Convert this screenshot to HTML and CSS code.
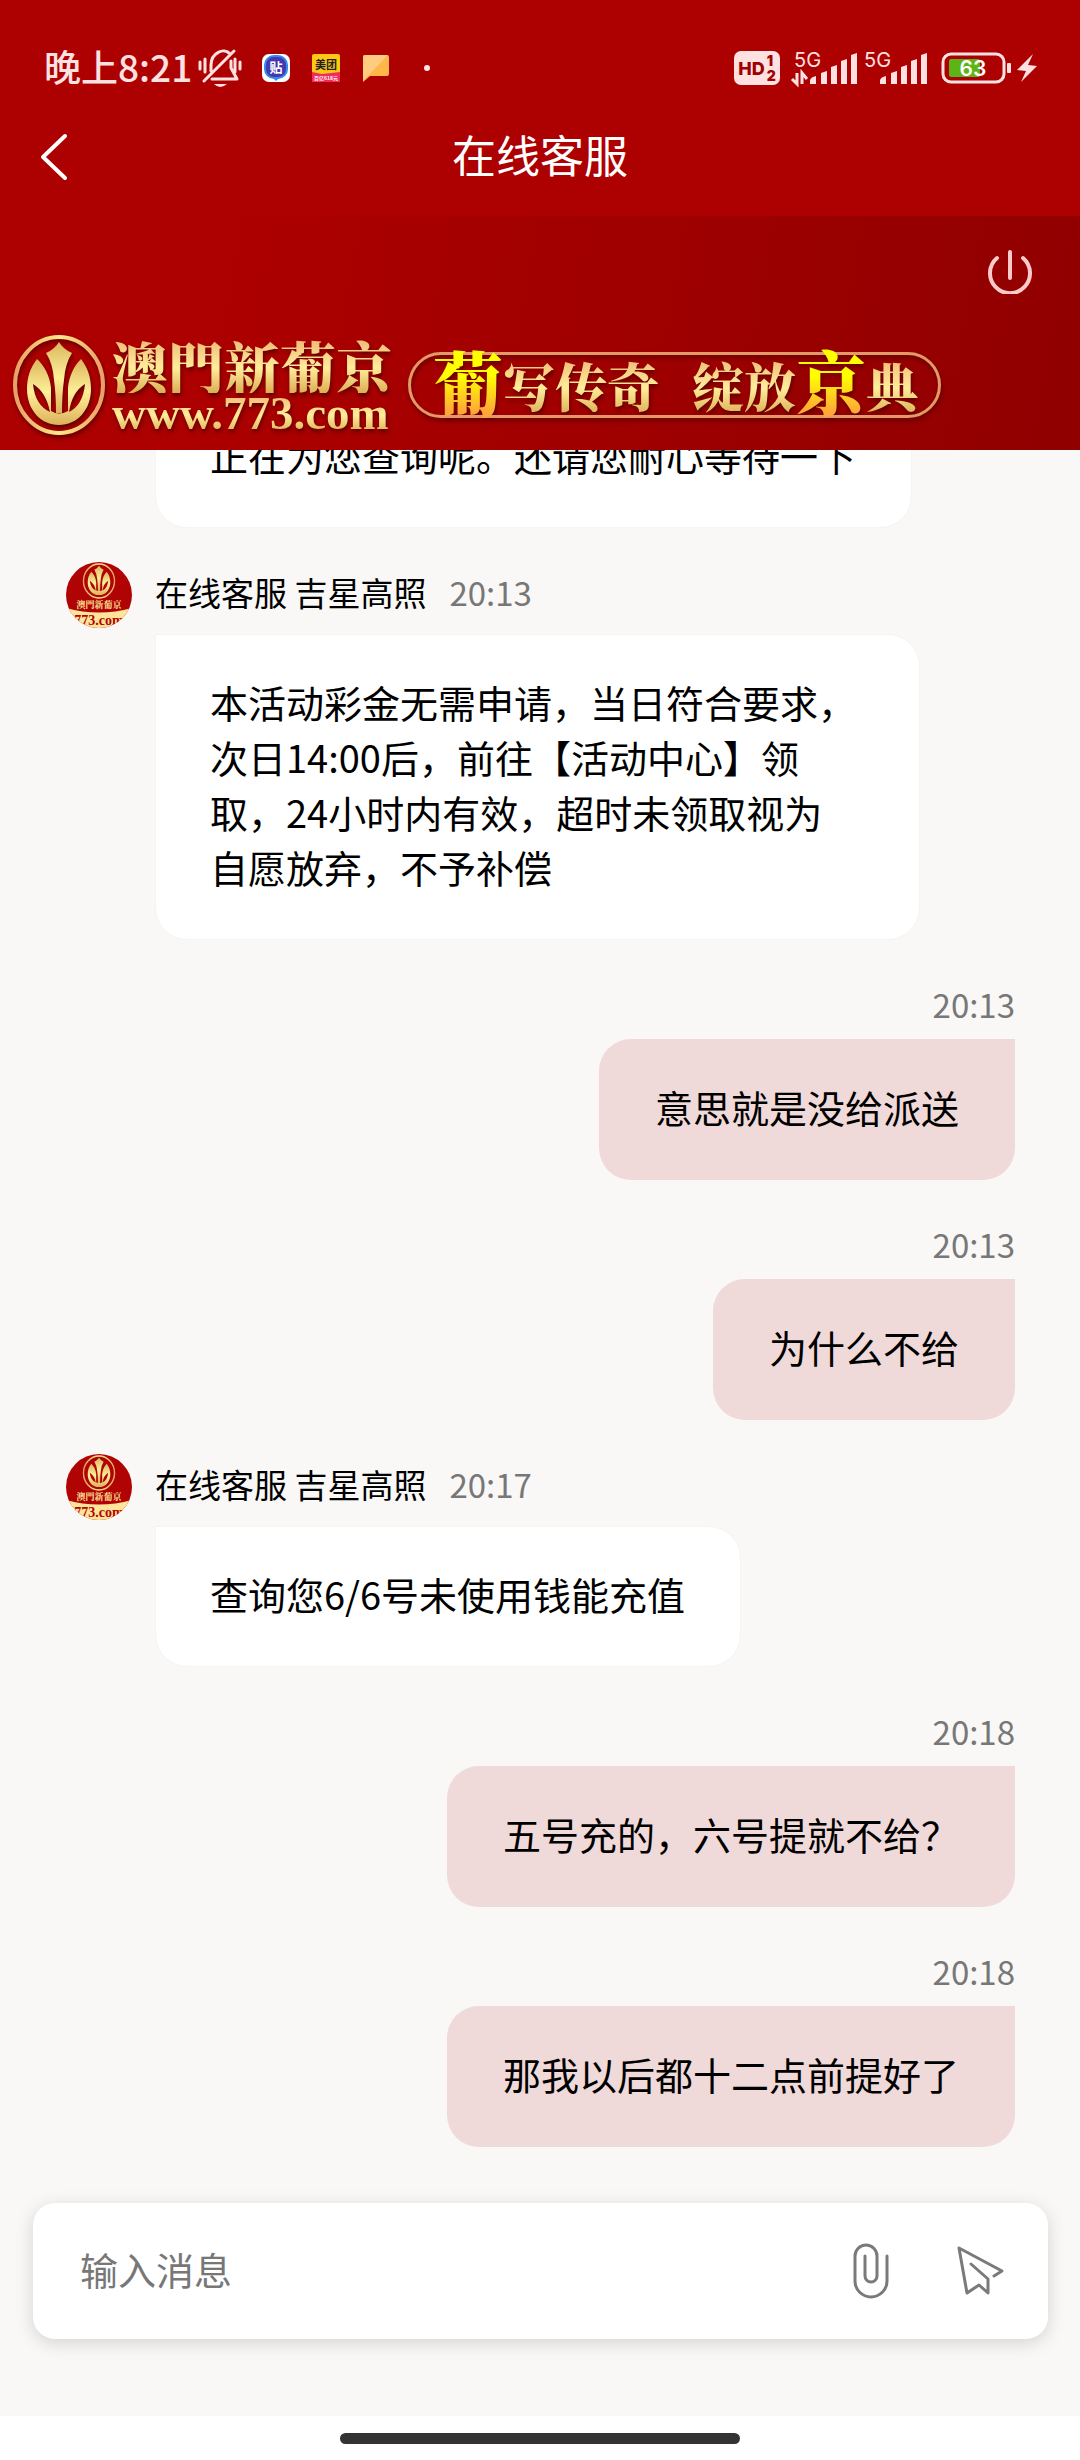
FILE: index.html
```html
<!DOCTYPE html>
<html lang="zh-CN">

<head>
    <meta charset="UTF-8">
    <meta name="viewport" content="width=device-width, initial-scale=1.0">
    <title>在线客服</title>
    <link rel="stylesheet" href="styles.css">
</head>

<body>
    <!-- 公用图形 -->
    <svg class="defs" width="0" height="0" aria-hidden="true">
        <defs>
            <linearGradient id="gold" x1="0" y1="0" x2="0" y2="1">
                <stop offset="0" stop-color="#d9b55c" />
                <stop offset="0.5" stop-color="#fff09a" />
                <stop offset="1" stop-color="#dcb25a" />
            </linearGradient>
            <linearGradient id="ring" x1="0" y1="0" x2="1" y2="0">
                <stop offset="0" stop-color="#e8a066" />
                <stop offset="0.5" stop-color="#ffe98c" />
                <stop offset="1" stop-color="#e8a066" />
            </linearGradient>
            <clipPath id="round">
                <circle cx="33" cy="33" r="33" />
            </clipPath>
            <symbol id="emblem" viewBox="0 0 94 102">
                <ellipse cx="47" cy="51" rx="44" ry="48" fill="none" stroke="url(#ring)" stroke-width="4" />
                <path fill="url(#gold)" d="M47 8 Q43 15 34 19 Q41 30 42 46 Q44 60 44 79 H50 Q50 60 52 46 Q53 30 60 19 Q51 15 47 8 Z" />
                <path fill="url(#gold)" fill-rule="evenodd" d="M25 25 C18 34 15 44 15 55 C15 76 29 91 47 91 C65 91 79 76 79 55 C79 44 76 34 69 25 C62 32 57 42 56 54 V77 Q47 82 39 77 V54 C38 42 32 31 25 25 Z M21 50 Q34 58 38 78 Q23 71 21 50 Z M73 50 Q71 71 57 78 Q60 58 73 50 Z" />
            </symbol>
            <symbol id="avatar" viewBox="0 0 66 66">
                <g clip-path="url(#round)">
                    <rect width="66" height="66" fill="#b00404" />
                    <path d="M0 46 Q33 55 66 46 V66 H0 Z" fill="#ffe49a" />
                    <use href="#emblem" x="16" y="1" width="34" height="36" />
                    <text x="33" y="46" class="avatar-name" text-anchor="middle">澳門新葡京</text>
                    <text x="33" y="63" class="avatar-site" text-anchor="middle">773.com</text>
                </g>
            </symbol>
            <symbol id="bars" viewBox="0 0 70 36">
                <path d="M20 34 V30 Q21 27 26 26 V34 Z M31 34 V23 L37 21 V34 Z M41 34 V17 L47 15 V34 Z M51 34 V11 L57 9 V34 Z M61 34 V5 L67 3 V34 Z" />
            </symbol>
        </defs>
    </svg>

    <div class="app">
        <header class="top">
            <!-- 状态栏 -->
            <div class="status">
                <div class="status-left">
                    <span class="clock">晚上8:21</span>
                    <svg class="mute" viewBox="0 0 44 40">
                        <path d="M2 14V21M7 11V24M37 11V24M42 14V21M6 33L36 3M13 23V17C13 5 26 -1 32 6M33 13V20L39 31H14" />
                        <path class="solid" d="M16 36H29Q22 42 16 36Z" />
                    </svg>
                    <svg class="app-icon" viewBox="0 0 28 28">
                        <rect width="28" height="28" rx="7" fill="#fff" />
                        <rect x="3" y="2" width="22" height="22" rx="9" fill="#4638ad" stroke="#2f8cf0" stroke-width="2" />
                        <path d="M11 24H17L14 27Z" fill="#2f8cf0" />
                        <text x="14" y="18" class="tie" text-anchor="middle">贴</text>
                    </svg>
                    <svg class="app-icon" viewBox="0 0 28 28">
                        <rect width="28" height="28" rx="2" fill="#ffc814" />
                        <path d="M0 18L10 20L28 18V26Q28 28 26 28H2Q0 28 0 26Z" fill="#ef2c5c" />
                        <text x="14" y="15" class="mt" text-anchor="middle">美团</text>
                        <text x="14" y="26" class="mt-sale" text-anchor="middle">百亿618元</text>
                    </svg>
                    <svg class="app-icon" viewBox="0 0 28 28">
                        <path d="M1 3Q1 1 3 1H25Q27 1 27 3V20Q27 22 25 22H8L1 28Z" fill="#ffb74a" />
                        <path d="M1 3Q1 1 3 1H26L1 27Z" fill="#ffcb80" />
                    </svg>
                    <span class="dot"></span>
                </div>
                <div class="status-right">
                    <span class="hd">HD<span class="hd-sim"><b>1</b><b>2</b></span></span>
                    <svg class="signal" viewBox="0 0 70 36">
                        <text x="4" y="17">5G</text>
                        <use href="#bars" />
                        <path class="arrows" d="M7 23V34L2 29M12 34V23L17 29" />
                    </svg>
                    <svg class="signal" viewBox="0 0 70 36">
                        <text x="4" y="17">5G</text>
                        <use href="#bars" />
                    </svg>
                    <svg class="battery" viewBox="0 0 71 32">
                        <rect x="2" y="2" width="61" height="28" rx="8" class="shell" />
                        <rect x="8" y="7" width="31" height="18" rx="2" fill="#5cb416" />
                        <rect x="66" y="11" width="4" height="10" rx="1" fill="#ffe1e1" />
                        <text x="32" y="24" text-anchor="middle">63</text>
                    </svg>
                    <svg class="bolt" viewBox="0 0 20 30">
                        <path d="M16 1L0 17L9 18L4 29L20 13L11 12Z" />
                    </svg>
                </div>
            </div>

            <!-- 标题栏 -->
            <nav class="nav">
                <button class="icon-btn back" type="button" aria-label="返回">
                    <svg viewBox="0 0 28 48">
                        <path d="M25 3L3 24L25 45" />
                    </svg>
                </button>
                <h1>在线客服</h1>
            </nav>
        </header>

        <!-- 品牌横幅 -->
        <section class="banner">
            <button class="icon-btn power" type="button" aria-label="退出">
                <svg viewBox="0 0 44 44">
                    <path d="M22 2V28M9 8A20 20 0 1 0 35 8" />
                </svg>
            </button>
            <div class="brand">
                <svg class="brand-logo">
                    <use href="#emblem" />
                </svg>
                <div class="wordmark">
                    <span class="brand-name">澳門新葡京</span>
                    <span class="brand-site">www.773.com</span>
                </div>
                <div class="slogan">
                    <span class="big">葡</span><span>写传奇</span><span class="second">绽放</span><span class="big">京</span><span>典</span>
                </div>
            </div>
        </section>

        <!-- 聊天记录 -->
        <main class="chat">
            <article class="msg in">
                <p class="bubble">正在为您查询呢。还请您耐心等待一下</p>
            </article>
            <article class="msg in">
                <div class="meta">
                    <svg class="avatar"><use href="#avatar" /></svg>
                    <span class="name">在线客服 吉星高照</span>
                    <time>20:13</time>
                </div>
                <p class="bubble">本活动彩金无需申请，当日符合要求，次日14:00后，前往【活动中心】领取，24小时内有效，超时未领取视为<br>自愿放弃，不予补偿</p>
            </article>
            <article class="msg out">
                <div class="meta"><time>20:13</time></div>
                <p class="bubble">意思就是没给派送</p>
            </article>
            <article class="msg out">
                <div class="meta"><time>20:13</time></div>
                <p class="bubble">为什么不给</p>
            </article>
            <article class="msg in">
                <div class="meta">
                    <svg class="avatar"><use href="#avatar" /></svg>
                    <span class="name">在线客服 吉星高照</span>
                    <time>20:17</time>
                </div>
                <p class="bubble">查询您6/6号未使用钱能充值</p>
            </article>
            <article class="msg out">
                <div class="meta"><time>20:18</time></div>
                <p class="bubble">五号充的，六号提就不给？</p>
            </article>
            <article class="msg out">
                <div class="meta"><time>20:18</time></div>
                <p class="bubble">那我以后都十二点前提好了</p>
            </article>
        </main>

        <!-- 输入框 -->
        <form class="composer">
            <input type="text" placeholder="输入消息" aria-label="输入消息">
            <button class="icon-btn clip" type="button" aria-label="附件">
                <svg viewBox="0 0 40 62">
                    <path d="M15 16V36A6 6 0 0 0 27 36V16A11 11 0 0 0 5 16V41A16 16 0 0 0 37 41V16" />
                </svg>
            </button>
            <button class="icon-btn send" type="submit" aria-label="发送">
                <svg viewBox="0 0 50 50">
                    <path d="M38 30L46 25L3 2L11 47L23 39L32 47V33L15 18" />
                </svg>
            </button>
        </form>

        <footer class="home"><span></span></footer>
    </div>
</body>

</html>
```

FILE: styles.css
```css
* {
    box-sizing: border-box;
}

body {
    margin: 0;
    background-color: #f9f8f7;
    color: #000;
    font-family: "Noto Sans CJK SC", "Noto Sans", sans-serif;
}

.defs {
    position: absolute;
}

.app {
    display: flex;
    flex-direction: column;
    height: 100vh;
}

.icon-btn {
    display: flex;
    padding: 0;
    border: none;
    background: none;
    cursor: pointer;
}

.icon-btn path {
    fill: none;
    stroke-linecap: round;
    stroke-linejoin: round;
}

/* 状态栏 */
.top {
    background-color: #ad0000;
}

.status {
    display: flex;
    justify-content: space-between;
    align-items: center;
    padding: 50px 43px 0 44px;
    height: 86px;
}

.status-left,
.status-right {
    display: flex;
    align-items: center;
}

.status-left {
    gap: 22px;
}

.clock {
    margin-right: -16px;
    padding-bottom: 4px;
    color: #ffe1e1;
    font-size: 37px;
    font-weight: 500;
    line-height: 36px;
}

.mute {
    width: 44px;
    height: 40px;
    margin-right: -2px;
    fill: none;
    stroke: #ffe1e1;
    stroke-width: 3;
    stroke-linecap: round;
    stroke-linejoin: round;
}

.mute .solid {
    fill: #ffe1e1;
    stroke: none;
}

.app-icon {
    width: 28px;
    height: 28px;
}

.tie {
    fill: #fff;
    font-size: 13px;
    font-weight: 700;
}

.mt {
    fill: #222;
    font-size: 11px;
    font-weight: 700;
}

.mt-sale {
    fill: #fff;
    font-size: 5px;
    font-weight: 700;
}

.dot {
    width: 6px;
    height: 6px;
    margin-left: 12px;
    border-radius: 50%;
    background-color: #ffe1e1;
}

.hd {
    display: flex;
    justify-content: center;
    align-items: center;
    gap: 2px;
    width: 46px;
    height: 34px;
    margin-right: 10px;
    border-radius: 7px;
    background-color: #ffe1e1;
    color: #a00000;
    font-family: Inter, sans-serif;
    font-size: 18px;
    font-weight: 800;
}

.hd-sim {
    display: flex;
    flex-direction: column;
    font-size: 14px;
    line-height: 15px;
}

.signal {
    width: 70px;
    height: 36px;
    overflow: visible;
    fill: #ffe1e1;
    font-family: Inter, sans-serif;
    font-size: 20px;
}

.arrows {
    fill: none;
    stroke: #ffe1e1;
    stroke-width: 3;
}

.battery {
    width: 71px;
    height: 32px;
    margin-left: 11px;
    fill: #fff;
    font-family: Inter, sans-serif;
    font-size: 21px;
    font-weight: 600;
}

.shell {
    fill: none;
    stroke: #ffe1e1;
    stroke-width: 3;
}

.bolt {
    width: 20px;
    height: 30px;
    margin-left: 5px;
    fill: #ffe1e1;
}

/* 标题栏 */
.nav {
    display: grid;
    grid-template-columns: 1fr auto 1fr;
    align-items: center;
    height: 130px;
    padding: 12px 40px 0;
}

.nav h1 {
    margin: 0;
    padding-bottom: 6px;
    color: #fff;
    font-size: 44px;
    font-weight: 400;
    line-height: 60px;
}

.back svg {
    width: 28px;
    height: 48px;
    stroke: #fff;
    stroke-width: 4;
}

/* 品牌横幅 */
.banner {
    display: flex;
    flex-direction: column;
    gap: 40px;
    padding: 34px 12px 14px;
    background: linear-gradient(100deg, #ad0000 20%, #900000);
}

.power {
    align-self: flex-end;
    margin-right: 36px;
}

.power svg {
    width: 44px;
    height: 44px;
    stroke: #ffc9c9;
    stroke-width: 4;
}

.brand {
    display: flex;
    align-items: center;
    gap: 6px;
}

.brand-logo {
    width: 94px;
    height: 102px;
    filter: drop-shadow(1px 3px 2px #600000);
}

.wordmark {
    display: flex;
    flex-direction: column;
    width: 280px;
    filter: drop-shadow(1px 3px 2px #600000);
}

.brand-name,
.brand-site,
.slogan span {
    background: linear-gradient(#efb574, #ffed9a 55%, #dcae54);
    -webkit-background-clip: text;
    background-clip: text;
    color: transparent;
}

.brand-name {
    font-family: "Noto Serif CJK TC", "Noto Sans CJK TC", serif;
    font-size: 56px;
    font-weight: 900;
    line-height: 56px;
}

.brand-site {
    font-family: "Liberation Serif", serif;
    font-size: 47px;
    font-weight: 700;
    line-height: 40px;
}

.slogan {
    display: flex;
    align-items: center;
    height: 66px;
    margin-left: 10px;
    padding: 0 20px 0 22px;
    border: 3px solid #e29a66;
    border-radius: 33px;
    font-family: "Noto Serif CJK SC", "Noto Sans CJK SC", serif;
    font-size: 52px;
    font-weight: 900;
    line-height: 60px;
    white-space: nowrap;
    filter: drop-shadow(1px 3px 2px #600000);
}

.slogan .big {
    padding-bottom: 8px;
    background-image: linear-gradient(#ffff00 40%, #ffa53a 80%);
    font-size: 70px;
    line-height: 84px;
}

.slogan .second {
    margin-left: 33px;
}

/* 聊天记录 */
.chat {
    display: flex;
    flex: 1;
    flex-direction: column;
    justify-content: flex-end;
    gap: 34px;
    min-height: 0;
    overflow: hidden;
    padding: 0 65px 56px 66px;
}

.msg {
    display: flex;
    flex-direction: column;
    flex-shrink: 0;
}

.meta {
    display: flex;
    align-items: center;
    height: 65px;
    padding-bottom: 6px;
    font-size: 33px;
    line-height: 48px;
}

.meta time {
    color: #777;
}

.bubble {
    margin: 0;
    font-size: 38px;
    line-height: 55px;
}

.in .meta {
    align-items: flex-start;
    height: 72px;
    padding: 0;
}

.in .meta span,
.in .meta time {
    padding-top: 6px;
}

.in time {
    margin-left: 23px;
}

.avatar {
    width: 66px;
    height: 66px;
    margin-right: 23px;
}

.avatar-name {
    fill: #ffe49a;
    font-family: "Noto Serif CJK TC", "Noto Sans CJK TC", serif;
    font-size: 9px;
    font-weight: 700;
}

.avatar-site {
    fill: #b00404;
    font-family: "Liberation Serif", serif;
    font-size: 14px;
    font-weight: 700;
}

.in .bubble {
    align-self: flex-start;
    max-width: calc(100% - 184px);
    margin-left: 89px;
    padding: 39px 55px 45px 54px;
    border: 1px solid #f5f4f3;
    border-radius: 0 32px 32px 32px;
    background-color: #fff;
}

.out {
    align-items: flex-end;
}

.out .bubble {
    padding: 40px 56px 46px;
    border-radius: 32px 0 32px 32px;
    background-color: #f0d9d9;
}

/* 输入框 */
.composer {
    display: flex;
    align-items: center;
    height: 136px;
    margin: 0 32px 77px 33px;
    padding: 0 42px 0 47px;
    border-radius: 22px;
    background-color: #fff;
    box-shadow: 0 4px 18px rgba(0, 0, 0, 0.15);
}

.composer input {
    flex: 1;
    min-width: 0;
    padding: 0 0 4px;
    border: none;
    outline: none;
    background: none;
    font-family: inherit;
    font-size: 38px;
    line-height: 56px;
}

.composer input::placeholder {
    color: #777;
    opacity: 1;
}

.composer path {
    stroke: #7a7a7a;
    stroke-width: 3;
}

.clip svg {
    width: 40px;
    height: 62px;
}

.send {
    margin-left: 66px;
}

.send svg {
    width: 50px;
    height: 50px;
}

/* 底部手势条 */
.home {
    display: flex;
    justify-content: center;
    align-items: center;
    height: 44px;
    background-color: #fff;
}

.home span {
    width: 37%;
    height: 11px;
    border-radius: 6px;
    background-color: #333;
}
```
